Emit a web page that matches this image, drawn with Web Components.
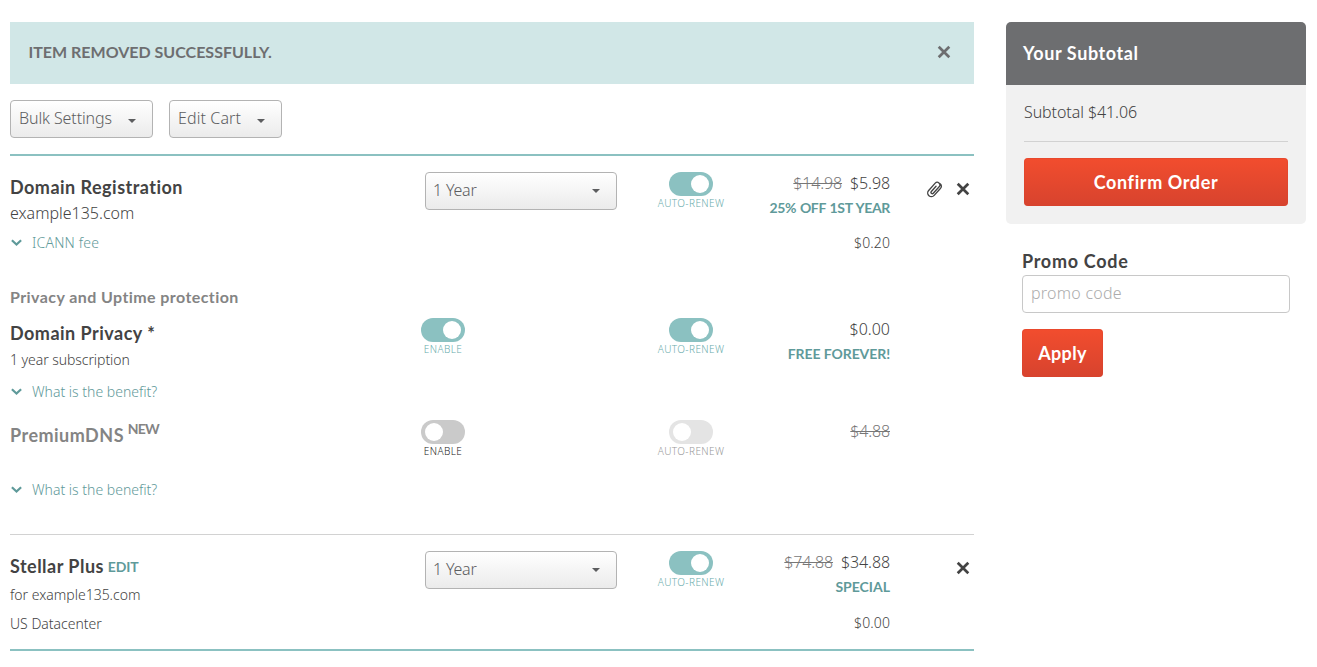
<!DOCTYPE html>
<html lang="en">
<head>
<meta charset="utf-8">
<title>Shopping Cart</title>
<style>
    body {
        margin: 0;
        background: #fff;
        color: #434343;
        font: 300 16px/26px "Noto Sans", sans-serif;
        --bold: "Lato", sans-serif;
        --teal: #8bc1c1;
        --link: #5f9a9a;
    }
</style>
</head>
<body>

<cart-page>
    <cart-alert>ITEM REMOVED SUCCESSFULLY.</cart-alert>

    <cart-toolbar>
        <drop-button>Bulk Settings</drop-button>
        <drop-button style="--ls: .12px">Edit Cart</drop-button>
    </cart-toolbar>

    <cart-product>
        <cart-row style="--h: 59px">
            <cart-title>Domain Registration</cart-title>
            <cart-text large>example135.com</cart-text>
            <drop-button slot="term" wide>1 Year</drop-button>
            <toggle-switch slot="renew" on>AUTO-RENEW</toggle-switch>
            <price-tag slot="price" was="$14.98" now="$5.98" style="--ls: -.35px; --ws: .8px">25% OFF 1ST YEAR</price-tag>
            <cart-icon slot="actions" name="clip"></cart-icon>
            <cart-icon slot="actions" name="close"></cart-icon>
        </cart-row>
        <cart-row style="--h: 53px">
            <more-link style="--ls: .2px">ICANN fee</more-link>
            <price-tag slot="price" small now="$0.20"></price-tag>
        </cart-row>
        <cart-row style="--h: 34px">
            <cart-title sub>Privacy and Uptime protection</cart-title>
        </cart-row>
        <cart-row style="--h: 102px">
            <cart-title>Domain Privacy *</cart-title>
            <cart-text>1 year subscription</cart-text>
            <more-link>What is the benefit?</more-link>
            <toggle-switch slot="term" on>ENABLE</toggle-switch>
            <toggle-switch slot="renew" on>AUTO-RENEW</toggle-switch>
            <price-tag slot="price" now="$0.00" style="--ls: -.08px">FREE FOREVER!</price-tag>
        </cart-row>
        <cart-row style="--h: 114px">
            <cart-title muted>PremiumDNS <span slot="note">NEW</span></cart-title>
            <more-link spaced>What is the benefit?</more-link>
            <toggle-switch slot="term" off>ENABLE</toggle-switch>
            <toggle-switch slot="renew" disabled>AUTO-RENEW</toggle-switch>
            <price-tag slot="price" was="$4.88"></price-tag>
        </cart-row>
    </cart-product>

    <cart-product last>
        <cart-row style="--h: 60px">
            <cart-title>Stellar Plus <a slot="edit">EDIT</a></cart-title>
            <cart-text after>for example135.com</cart-text>
            <drop-button slot="term" wide>1 Year</drop-button>
            <toggle-switch slot="renew" on>AUTO-RENEW</toggle-switch>
            <price-tag slot="price" was="$74.88" now="$34.88">SPECIAL</price-tag>
            <cart-icon slot="actions" name="close"></cart-icon>
        </cart-row>
        <cart-row style="--h: 38px">
            <cart-text bare>US Datacenter</cart-text>
            <price-tag slot="price" small now="$0.00"></price-tag>
        </cart-row>
    </cart-product>

    <subtotal-panel slot="side">
        <span slot="heading">Your Subtotal</span>
        Subtotal $41.06
        <action-button slot="action">Confirm Order</action-button>
    </subtotal-panel>
    <promo-form slot="side"></promo-form>
</cart-page>

<script>
// Small helper: registers an element whose shadow root is cloned from a template.
function define(name, html, setup) {
    const template = document.createElement("template");
    template.innerHTML = html;

    window.customElements.define(name, class extends HTMLElement {
        constructor() {
            super();
            this.attachShadow({ mode: "open" });
            this.shadowRoot.appendChild(template.content.cloneNode(true));
        }

        connectedCallback() {
            if (setup) setup(this, this.shadowRoot);
        }
    });
}

// Two columns: the cart itself and the order summary.
define("cart-page", `
    <style>
        :host {
            display: grid;
            grid-template-columns: 964px 300px;
            column-gap: 32px;
            padding: 22px 10px 0;
        }
    </style>
    <main><slot></slot></main>
    <aside><slot name="side"></slot></aside>
`);

define("cart-icon", `
    <style>
        :host { display: block; color: #434343; }
        svg { display: block; fill: none; stroke: currentColor; }
    </style>
    <slot></slot>
`, (el, root) => {
    const icons = {
        close: `<svg width="14" height="14" viewBox="0 0 14 14" stroke-width="2.7"><path d="M1.7 1.7 12.3 12.3M12.3 1.7 1.7 12.3"/></svg>`,
        clip: `<svg width="17" height="17" viewBox="0 0 17 17" stroke-width="1.35" stroke-linecap="round"><path transform="translate(8.5 8.5) rotate(42)" d="M3.7-4V4.6a3.7 3.7 0 0 1-7.4 0V-5.2a2.65 2.65 0 0 1 5.3 0V3.6a1.3 1.3 0 0 1-2.6 0V-3.4M3.7-4.4a3 3 0 0 0-3.6-3.5"/></svg>`,
        chevron: `<svg width="11" height="8" viewBox="0 0 11 8" stroke-width="2.2"><path d="M.9 1.2 5.5 5.6 10.1 1.2"/></svg>`
    };
    root.querySelector("slot").innerHTML = icons[el.getAttribute("name")];
});

define("cart-alert", `
    <style>
        :host {
            display: flex;
            justify-content: space-between;
            align-items: center;
            box-sizing: border-box;
            height: 62px;
            padding: 0 23px 2px 18.5px;
            background: #d1e7e7;
            color: #6d6e70;
            font-family: var(--bold);
            font-weight: 700;
        }
        cart-icon { color: #6d6e70; }
    </style>
    <slot></slot>
    <cart-icon name="close"></cart-icon>
`);

define("cart-toolbar", `
    <style>
        :host {
            display: flex;
            gap: 16px;
            padding: 16px 0;
            border-bottom: 2px solid var(--teal);
        }
    </style>
    <slot></slot>
`);

// Grey gradient button with a caret, also used as the term selector.
define("drop-button", `
    <style>
        :host {
            display: flex;
            align-items: center;
            box-sizing: border-box;
            height: 38px;
            padding: 0 16px 2px 8px;
            border: 1px solid #b3b3b3;
            border-radius: 4px;
            background: linear-gradient(#fff, #ebebeb);
            color: #5c5d5f;
            letter-spacing: var(--ls, -.1px);
        }
        i {
            margin: 6px 0 0 16px;
            border: 4px solid transparent;
            border-top-color: #5c5d5f;
            border-bottom: 0;
        }
        :host([wide]) {
            width: 192px;
            margin-left: 15px;
            padding-left: 7px;
            justify-content: space-between;
            letter-spacing: -.2px;
        }
        :host([wide]) i { margin: 1px 0 0; }
    </style>
    <slot></slot><i></i>
`);

define("cart-product", `
    <style>
        :host {
            display: block;
            padding-top: 16px;
            border-bottom: 1px solid #d2d2d2;
        }
        :host([last]) { border-bottom: 2px solid var(--teal); }
    </style>
    <slot></slot>
`);

// One line of the cart: name, term, renewal, price and actions.
define("cart-row", `
    <style>
        :host {
            display: grid;
            grid-template-columns: 400px 248px 66px 166px 84px;
            height: var(--h);
            align-items: start;
        }
        .actions {
            display: flex;
            justify-content: flex-end;
            align-items: center;
            gap: 13px;
            height: 34px;
            padding-right: 4px;
        }
    </style>
    <div><slot></slot></div>
    <div><slot name="term"></slot></div>
    <div><slot name="renew"></slot></div>
    <div><slot name="price"></slot></div>
    <div class="actions"><slot name="actions"></slot></div>
`);

define("cart-title", `
    <style>
        :host {
            display: flex;
            align-items: baseline;
            height: 28px;
            font: 700 18px/30px var(--bold);
            letter-spacing: .48px;
            white-space: pre;
        }
        :host([sub]) {
            color: #848484;
            font-size: 16px;
            line-height: 26px;
            letter-spacing: .42px;
        }
        :host([muted]) { color: #848484; }
        ::slotted([slot]) {
            margin-left: -1px;
            font-size: 14px;
            letter-spacing: -.15px;
        }
        ::slotted([slot=edit]) {
            color: var(--link);
            transform: translateY(-1px);
        }
        ::slotted([slot=note]) {
            letter-spacing: -.9px;
            transform: translateY(-8px);
        }
    </style>
    <slot></slot><slot name="edit"></slot><slot name="note"></slot>
`);

define("cart-text", `
    <style>
        :host {
            display: block;
            font-size: 14px;
            line-height: 28px;
            letter-spacing: -.06px;
        }
        :host([large]) {
            font-size: 16px;
            line-height: 26px;
            letter-spacing: 0;
        }
        :host([after]) {
            line-height: 31px;
            letter-spacing: 0;
        }
        :host([bare]) {
            line-height: 25px;
            letter-spacing: 0;
        }
    </style>
    <slot></slot>
`);

define("more-link", `
    <style>
        :host {
            display: flex;
            align-items: center;
            gap: 10px;
            height: 24px;
            margin-top: 6px;
            padding-left: 1px;
            color: var(--link);
            font-size: 14px;
            letter-spacing: var(--ls, 0);
        }
        :host(:first-child) { margin-top: 0; }
        :host([spaced]) { margin-top: 30px; }
        cart-icon { color: var(--link); }
    </style>
    <cart-icon name="chevron"></cart-icon><slot></slot>
`);

define("toggle-switch", `
    <style>
        :host {
            display: flex;
            flex-direction: column;
            align-items: center;
            width: 66px;
            font-size: 10px;
            line-height: 14px;
            letter-spacing: .4px;
            white-space: nowrap;
        }
        .track {
            display: flex;
            box-sizing: border-box;
            width: 44px;
            height: 24px;
            padding: 3px 4px;
            border-radius: 12px;
            background: #cacaca;
        }
        .knob {
            width: 18px;
            height: 18px;
            border-radius: 50%;
            background: #fff;
        }
        :host([off]) { color: #222; }
        :host([on]) { color: #6aacac; }
        :host([on]) .track {
            justify-content: flex-end;
            background: var(--teal);
        }
        :host([disabled]) { color: #999; }
        :host([disabled]) .track { background: #e4e4e4; }
    </style>
    <div class="track"><div class="knob"></div></div>
    <slot></slot>
`);

define("price-tag", `
    <style>
        :host {
            display: block;
            text-align: right;
        }
        .line {
            display: flex;
            justify-content: flex-end;
            gap: 8px;
            height: 24px;
            line-height: 22px;
        }
        s { color: #777; letter-spacing: -.15px; }
        s + span { letter-spacing: -.1px; }
        slot {
            display: block;
            color: var(--link);
            font: 700 14px/24px var(--bold);
            letter-spacing: var(--ls, 0);
            word-spacing: var(--ws, 0);
        }
        :host([small]) .line {
            font-size: 14px;
            line-height: 24px;
            letter-spacing: .1px;
        }
    </style>
    <div class="line"></div>
    <slot></slot>
`, (el, root) => {
    const line = root.querySelector(".line");
    line.innerHTML = "";
    for (const [attr, tag] of [["was", "s"], ["now", "span"]]) {
        if (!el.hasAttribute(attr)) continue;
        const node = document.createElement(tag);
        node.textContent = el.getAttribute(attr);
        line.appendChild(node);
    }
});

define("action-button", `
    <style>
        :host {
            display: flex;
            justify-content: center;
            box-sizing: border-box;
            height: 48px;
            border-radius: 4px;
            background: linear-gradient(#f24d2e, #d7432e);
            box-shadow: inset 0 0 0 1px #d9432e55;
            color: #fff;
            font: 700 18px/48px var(--bold);
            letter-spacing: var(--ls, .6px);
        }
    </style>
    <slot></slot>
`);

define("subtotal-panel", `
    <style>
        :host {
            display: block;
            height: 202px;
            border-radius: 5px;
            background: #f1f1f1;
            overflow: hidden;
        }
        header {
            height: 63px;
            padding-left: 17px;
            background: #6d6e70;
            color: #fff;
            font: 700 18px/62px var(--bold);
            letter-spacing: .6px;
        }
        .body { padding: 0 18px; }
        .total {
            height: 56px;
            margin-bottom: 16px;
            border-bottom: 1px solid #d2d2d2;
            line-height: 55px;
            letter-spacing: -.08px;
        }
    </style>
    <header><slot name="heading"></slot></header>
    <div class="body">
        <div class="total"><slot></slot></div>
        <slot name="action"></slot>
    </div>
`);

define("promo-form", `
    <style>
        :host {
            display: flex;
            flex-direction: column;
            align-items: flex-start;
            padding: 24px 16px;
        }
        label {
            height: 27px;
            font: 700 18px/27px var(--bold);
            letter-spacing: .7px;
        }
        .field {
            box-sizing: border-box;
            width: 268px;
            height: 38px;
            margin-bottom: 16px;
            padding-left: 8px;
            border: 1px solid #c8c8c8;
            border-radius: 4px;
            color: #acacac;
            line-height: 35px;
            letter-spacing: .25px;
        }
        action-button { width: 81px; --ls: .3px; }
    </style>
    <label>Promo Code</label>
    <div class="field">promo code</div>
    <action-button>Apply</action-button>
`);
</script>
</body>
</html>
